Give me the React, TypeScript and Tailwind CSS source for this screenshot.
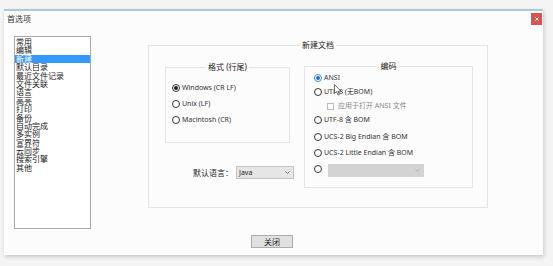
import React from "react";

const font = { fontFamily: '"Noto Sans", "Noto Sans CJK SC", sans-serif' };

function Radio({ checked, blue }: { checked?: boolean; blue?: boolean }) {
  return (
    <span
      className={`flex h-[8px] w-[8px] shrink-0 items-center justify-center rounded-full border bg-white ${
        blue ? "border-[#3c8ddb]" : "border-[#333]"
      }`}
    >
      {checked && (
        <span className={`h-[4px] w-[4px] rounded-full ${blue ? "bg-[#1a6fd0]" : "bg-[#222]"}`} />
      )}
    </span>
  );
}

const menu = [
  "常用",
  "编辑",
  "新建",
  "默认目录",
  "最近文件记录",
  "文件关联",
  "语言",
  "高亮",
  "打印",
  "备份",
  "自动完成",
  "多实例",
  "宣界符",
  "云同步",
  "搜索引擎",
  "其他",
];

export default function App() {
  return (
    <div className="h-[266px] w-[553px] overflow-hidden bg-[#f4f4f4] pl-[4px] pt-[9px] text-[#222]" style={font}>
      <div className="h-[246px] w-[539px] border-t-[2px] border-[#a9cad6] bg-[#fcfcfc] shadow-[1px_2px_4px_rgba(0,0,0,0.18)]">
        {/* title bar */}
        <div className="flex h-[15px] items-center justify-between pl-[3px] pr-[1px]">
          <span className="text-[8px] leading-[10px] text-[#333]">首选项</span>
          <span className="flex h-[12px] w-[11px] items-center justify-center bg-[#d9534f]">
            <svg width="4" height="4" viewBox="0 0 4 4">
              <path d="M0.5 0.5L3.5 3.5M3.5 0.5L0.5 3.5" stroke="#fff" strokeWidth="1" />
            </svg>
          </span>
        </div>
        {/* body */}
        <div className="flex">
          <div className="ml-[10px] mt-[10px] h-[193px] w-[77px] border border-[#a8a8a8] bg-white pt-[1px]">
            {menu.map((m, i) => (
              <div
                key={m}
                className={`h-[8.4px] pl-[1px] text-[8px] leading-[8.4px] ${
                  i === 2 ? "bg-[#3399ff] text-white" : "text-[#222]"
                }`}
              >
                {m}
              </div>
            ))}
          </div>
          <div className="ml-[57px] flex flex-col">
            <fieldset className="mt-[14px] h-[168px] w-[340px] border border-[#e4e4e4] p-0">
              <legend className="mx-auto px-[2px] text-[8px] leading-[10px] text-[#222]">新建文档</legend>
              <div className="flex items-start pl-[16px]">
                <div className="flex flex-col">
                  <fieldset className="mt-[12px] h-[81px] w-[125px] border border-[#e4e4e4] p-0">
                    <legend className="mx-auto px-[2px] text-[8px] leading-[10px] text-[#222]">格式 (行尾)</legend>
                    <div className="mt-[8px] flex flex-col pl-[6px]">
                      {[
                        ["Windows (CR LF)", true],
                        ["Unix (LF)", false],
                        ["Macintosh (CR)", false],
                      ].map(([t, c]) => (
                        <div key={t as string} className="flex h-[16px] items-center gap-[2px]">
                          <Radio checked={c as boolean} />
                          <span className="text-[7px] leading-[10px] text-[#333]">{t as string}</span>
                        </div>
                      ))}
                    </div>
                  </fieldset>
                  <div className="mt-[23px] flex h-[13px] w-[129px] items-center justify-end">
                    <span className="text-[8px] leading-[10px] text-[#222]">默认语言：</span>
                    <div className="ml-[3px] flex h-[13px] w-[58px] items-center justify-between border border-[#c4c4c4] bg-[#e6e6e6] pl-[2px] pr-[3px]">
                      <span className="text-[7px] leading-[10px] text-[#222]">Java</span>
                      <svg width="5" height="3" viewBox="0 0 5 3">
                        <path d="M0.5 0.5L2.5 2.5L4.5 0.5" stroke="#555" strokeWidth="0.8" fill="none" />
                      </svg>
                    </div>
                  </div>
                </div>
                <fieldset className="relative ml-[10px] mt-[11px] h-[127px] w-[169px] border border-[#e4e4e4] p-0">
                  <legend className="mx-auto px-[2px] text-[8px] leading-[10px] text-[#222]">编码</legend>
                  <div className="flex flex-col">
                    <div className="flex h-[14px] items-center gap-[2px] pl-[9px]">
                      <Radio checked blue />
                      <span className="text-[7px] leading-[10px] text-[#333]">ANSI</span>
                    </div>
                    <div className="flex h-[14px] items-center gap-[2px] pl-[9px]">
                      <Radio />
                      <span className="text-[7px] leading-[10px] text-[#333]">UTF-8 (无BOM)</span>
                    </div>
                    <div className="flex h-[14px] items-center gap-[4px] pl-[22px]">
                      <span className="h-[7px] w-[7px] border border-[#bbb] bg-white" />
                      <span className="text-[7px] leading-[10px] text-[#888]">应用于打开 ANSI 文件</span>
                    </div>
                    <div className="flex h-[14px] items-center gap-[2px] pl-[9px]">
                      <Radio />
                      <span className="text-[7px] leading-[10px] text-[#333]">UTF-8 含 BOM</span>
                    </div>
                    <div className="mt-[3px] flex h-[14px] items-center gap-[2px] pl-[9px]">
                      <Radio />
                      <span className="text-[7px] leading-[10px] text-[#333]">UCS-2 Big Endian 含 BOM</span>
                    </div>
                    <div className="mt-[2px] flex h-[14px] items-center gap-[2px] pl-[9px]">
                      <Radio />
                      <span className="text-[7px] leading-[10px] text-[#333]">UCS-2 Little Endian 含 BOM</span>
                    </div>
                    <div className="mt-[2px] flex h-[14px] items-center pl-[9px]">
                      <Radio />
                      <div className="ml-[6px] mt-[2px] flex h-[13px] w-[96px] items-center justify-end bg-[#d3d3d3] pr-[4px]">
                        <svg width="5" height="3" viewBox="0 0 5 3">
                          <path d="M0.5 0.5L2.5 2.5L4.5 0.5" stroke="#aaa" strokeWidth="0.8" fill="none" />
                        </svg>
                      </div>
                    </div>
                  </div>
                  <svg
                    className="absolute left-[29px] top-[13px]"
                    width="8"
                    height="12"
                    viewBox="0 0 8 12"
                  >
                    <path d="M0.5 0.5L0.5 9.5L2.6 7.6L4 11L5.4 10.4L4 7.2L7 7.2Z" fill="#fff" stroke="#333" strokeWidth="0.7" />
                  </svg>
                </fieldset>
              </div>
            </fieldset>
            <div className="ml-[103px] mt-[27px] flex h-[13px] w-[42px] items-center justify-center border border-[#adadad] bg-[#e1e1e1]">
              <span className="text-[8px] leading-[10px] text-[#222]">关闭</span>
            </div>
          </div>
        </div>
      </div>
    </div>
  );
}
